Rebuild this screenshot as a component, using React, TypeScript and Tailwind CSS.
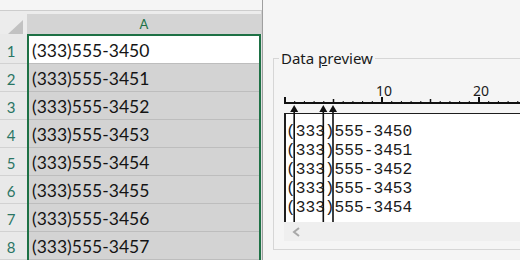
import React from "react";

const CW = 9.7;
const rows = Array.from({ length: 8 }, (_, i) => `(333)555-345${i}`);
const preview = rows.slice(0, 5);
const OFF = 12;

function Ruler() {
  const ticks = [];
  for (let k = 0; k <= 24; k++) {
    const x = 1 + k * CW;
    let top = 17;
    let w = 1;
    if (k % 10 === 0) {
      top = 13;
      w = 2;
    } else if (k % 5 === 0) {
      top = 15;
      w = 1.5;
    }
    ticks.push(<rect key={k} x={x - w / 2} y={top + OFF} width={w} height={20 - top} fill="#111" />);
  }
  return (
    <svg width="240" height={29 + OFF} className="block">
      <rect x="0" y={18 + OFF} width="240" height="2" fill="#111" />
      {ticks}
      {[10, 20].map((k) => (
        <text
          key={k}
          x={1 + k * CW + 2}
          y={12 + OFF}
          textAnchor="middle"
          fontSize="14"
          fontFamily="'Noto Sans', sans-serif"
          fill="#1a1a1a"
        >
          {k}
        </text>
      ))}
    </svg>
  );
}

function Breaks() {
  const cols = [1, 4, 5];
  return (
    <svg width="240" height="138" className="absolute left-0 pointer-events-none" style={{ top: OFF }}>
      {cols.map((k) => {
        const x = 1 + k * CW - 0.5;
        return (
          <g key={k}>
            <polygon points={`${x},21 ${x - 4},28 ${x + 4},28`} fill="#111" />
            <rect x={x - 0.8} y="27" width="1.6" height="111" fill="#111" />
          </g>
        );
      })}
    </svg>
  );
}

export default function App() {
  return (
    <div className="w-[520px] h-[260px] overflow-hidden flex bg-[#f5f5f5]">
      {/* Spreadsheet */}
      <div className="w-[262px] shrink-0 flex flex-col bg-[#e9e9e9] font-['Lato',sans-serif]">
        <div className="h-[14px] bg-[#f5f5f5] border-b border-[#cdcdcd]" />
        <div className="h-[27px] flex bg-[#ececec]">
          <div className="w-[27px] relative">
            <svg width="27" height="27" className="absolute left-0 top-0">
              <polygon points="8,23 23,23 23,9" fill="#c2c2c2" />
            </svg>
          </div>
          <div className="w-[234px] mt-[3px] bg-[#d4d4d4] flex items-center justify-center text-[13px] text-[#217346] pt-[1px]">
            A
          </div>
          <div className="w-[1px] bg-[#d0d0d0]" />
        </div>
        <div className="flex flex-1">
          <div className="w-[27px] pt-[2px] flex flex-col">
            {rows.map((_, i) => (
              <div
                key={i}
                className="h-[28px] shrink-0 border-b border-[#d2d2d2] pt-[3px] leading-[24px] text-[15px] text-[#2a7564] flex justify-center pr-[5px]"
              >
                {i + 1}
              </div>
            ))}
          </div>
          <div className="w-[234px] border-2 border-b-0 border-[#1e7145] flex flex-col">
            {rows.map((r, i) => (
              <div
                key={i}
                className={`h-[28px] shrink-0 border-b border-[#bdbdbd] pt-[3px] pl-[3px] leading-[24px] text-[17.5px] text-[#141414] ${
                  i === 0 ? "bg-white" : "bg-[#d3d3d3]"
                }`}
              >
                {r}
              </div>
            ))}
          </div>
          <div className="w-[1px] bg-[#e0e0e0]" />
        </div>
      </div>

      {/* Dialog */}
      <div className="flex-1 border-l border-[#9f9f9f] bg-[#f5f5f5] pl-[10px] pt-[58px] overflow-hidden">
        <div className="relative w-[300px] border border-[#d6d6d6] pl-[10px] pt-[13px] pb-[8px]">
          <div className="absolute left-[5px] top-[-11px] px-[2px] bg-[#f5f5f5] text-[15px] leading-[20px] text-[#1a1a1a] font-['Noto_Sans',sans-serif]">
            Data <span className="underline">p</span>review
          </div>
          <div className="relative">
            <Ruler />
            <div className="h-[109px] bg-white border-t border-l-2 border-[#1e1e1e] pt-[9px] font-['Liberation_Mono',monospace] text-[16.2px] leading-[19px] text-[#1a1a1a] whitespace-pre">
              {preview.map((p, i) => (
                <div key={i}>{p}</div>
              ))}
            </div>
            <div className="h-[19px] bg-[#efefef] flex items-center">
              <svg width="24" height="19" className="block">
                <polyline points="15,6 10,10 15,14" fill="none" stroke="#a8a8a8" strokeWidth="2" />
              </svg>
            </div>
            <Breaks />
          </div>
        </div>
      </div>
    </div>
  );
}
